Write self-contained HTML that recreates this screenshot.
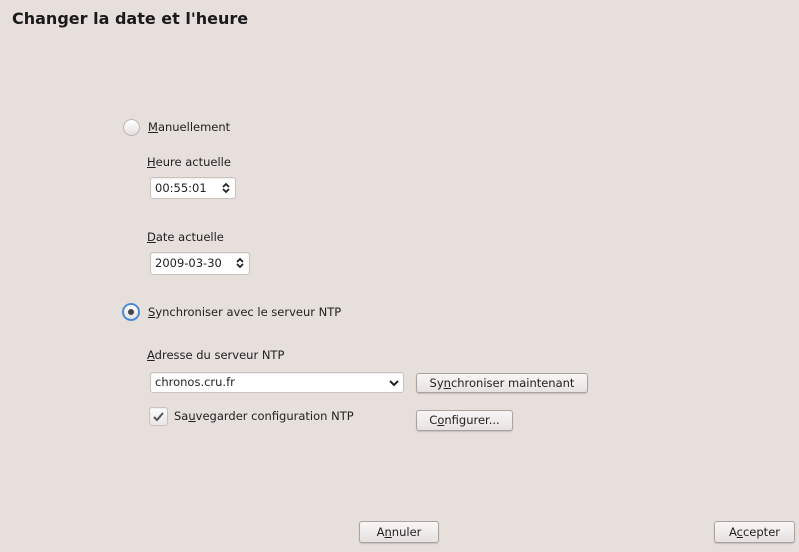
<!DOCTYPE html>
<html><head><meta charset="utf-8"><style>
body{margin:0;width:799px;height:552px;background:#e6dfdc;font-family:"DejaVu Sans","Liberation Sans",sans-serif;font-size:11.5px;color:#222;position:relative;overflow:hidden}
.a{position:absolute;white-space:nowrap}
.t{line-height:14px}
u{text-decoration:underline}
.field{position:absolute;background:#fff;border:1px solid #c9c2bf;border-radius:3px;box-shadow:inset 0 1px 1px rgba(0,0,0,.08)}
.btn{position:absolute;background:linear-gradient(#f8f6f5,#e7e2e0);border:1px solid #aaa39f;border-radius:3px;text-align:center;box-shadow:0 1px 1px rgba(0,0,0,.15)}
.radio{position:absolute;width:15px;height:15px;border-radius:50%;border:1px solid #bdb6b3;background:linear-gradient(#fff,#e4e0de)}
</style></head><body>
<div class="a" style="left:12px;top:9px;font-size:16px;font-weight:bold;color:#1a1a1a">Changer la date et l'heure</div>

<div class="radio" style="left:123px;top:119px"></div>
<div class="a t" style="left:148px;top:120px"><u>M</u>anuellement</div>
<div class="a t" style="left:147px;top:155px"><u>H</u>eure actuelle</div>
<div class="field" style="left:150px;top:177px;width:84px;height:20px"><span class="a" style="left:4px;top:3px">00:55:01</span>
<svg class="a" style="left:70px;top:3px" width="10" height="14"><path d="M2 6L5 3L8 6M2 8L5 11L8 8" fill="none" stroke="#222" stroke-width="1.8"/></svg></div>
<div class="a t" style="left:147px;top:230px"><u>D</u>ate actuelle</div>
<div class="field" style="left:150px;top:252px;width:98px;height:21px"><span class="a" style="left:4px;top:3px">2009-03-30</span>
<svg class="a" style="left:84px;top:3px" width="10" height="14"><path d="M2 6L5 3L8 6M2 8L5 11L8 8" fill="none" stroke="#222" stroke-width="1.8"/></svg></div>

<div class="radio" style="left:122px;top:303px;border:2px solid #4a8bd6;width:14px;height:14px"><div style="position:absolute;left:4px;top:4px;width:6px;height:6px;border-radius:50%;background:#444"></div></div>
<div class="a t" style="left:148px;top:305px"><u>S</u>ynchroniser avec le serveur NTP</div>
<div class="a t" style="left:147px;top:348px"><u>A</u>dresse du serveur NTP</div>
<div class="field" style="left:150px;top:372px;width:252px;height:19px"><span class="a" style="left:4px;top:2px">chronos.cru.fr</span>
<svg class="a" style="left:238px;top:5px" width="10" height="10"><path d="M1 3L5 7L9 3" fill="none" stroke="#222" stroke-width="2"/></svg></div>
<div class="btn" style="left:416px;top:373px;width:170px;height:18px;line-height:18px">Sy<u>n</u>chroniser maintenant</div>
<div class="field" style="left:149px;top:407px;width:17px;height:17px;background:linear-gradient(#fff,#e9e5e3)"><svg class="a" style="left:2px;top:2px" width="13" height="13"><path d="M2 7L5 10L11 3" fill="none" stroke="#555" stroke-width="2"/></svg></div>
<div class="a t" style="left:174px;top:409px">Sa<u>u</u>vegarder configuration NTP</div>
<div class="btn" style="left:416px;top:410px;width:95px;height:19px;line-height:19px">C<u>o</u>nfigurer...</div>

<div class="btn" style="left:359px;top:521px;width:78px;height:20px;line-height:20px">A<u>n</u>nuler</div>
<div class="btn" style="left:714px;top:521px;width:79px;height:20px;line-height:20px">A<u>c</u>cepter</div>
</body></html>
